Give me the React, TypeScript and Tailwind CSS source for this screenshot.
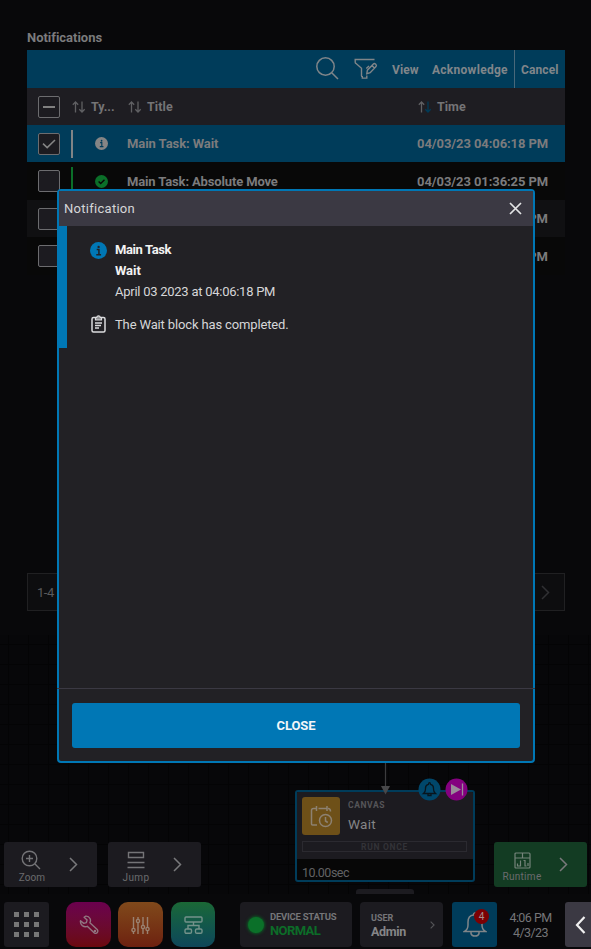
import type { ReactNode } from 'react';

type Row = { title?: string; time: string; kind?: 'info' | 'ok'; checked?: boolean; cls: string; titleCls?: string };

const rows: Row[] = [
  { title: 'Main Task: Wait', time: '04/03/23 04:06:18 PM', kind: 'info', checked: true, cls: 'h-[37px] bg-[#003c5a]', titleCls: 'tracking-[-0.07px]' },
  { title: 'Main Task: Absolute Move', time: '04/03/23 01:36:25 PM', kind: 'ok', cls: 'h-[38px] bg-[#080808]', titleCls: 'tracking-[-0.14px]' },
  { time: 'PM', cls: 'h-[37px] bg-[#101012]' },
  { time: 'PM', cls: 'h-[38px] bg-[#080808]' },
];

function Check({ mark }: { mark?: 'dash' | 'tick' }) {
  return (
    <span className="flex h-[22px] w-[22px] shrink-0 items-center justify-center rounded-[2px] border border-[#6c6c6f] bg-[#1c1b20]">
      {mark === 'dash' && <span className="h-[2px] w-3 bg-[#808080]" />}
      {mark === 'tick' && (
        <svg width="14" height="10" viewBox="0 0 14 10" fill="none" stroke="#858585" strokeWidth="1.5">
          <path d="M1 4.6 5.2 8.6 13 1" />
        </svg>
      )}
    </span>
  );
}

function SortArrows({ active }: { active?: boolean }) {
  return (
    <svg className="shrink-0" width="14" height="12" viewBox="0 0 14 12" fill="none" strokeWidth="1.3">
      <path stroke="#606063" d="M3.5 11.5V1M.8 3.7 3.5 1l2.7 2.7" />
      <path stroke={active ? '#003b58' : '#606063'} d="M10 .5V11M7.3 8.3 10 11l2.7-2.7" />
    </svg>
  );
}

function InfoIcon({ size, fill, ink }: { size: number; fill: string; ink: string }) {
  return (
    <svg className="shrink-0" width={size} height={size} viewBox="0 0 16 16">
      <circle cx="8" cy="8" r="8" fill={fill} />
      <circle cx="8.1" cy="4.6" r="1.1" fill={ink} />
      <path d="M6.3 7h2.1v4.8M5.9 11.9h4.5" fill="none" stroke={ink} strokeWidth="1.4" />
    </svg>
  );
}

function OkIcon() {
  return (
    <svg className="shrink-0" width="13" height="13" viewBox="0 0 13 13">
      <circle cx="6.5" cy="6.5" r="6.5" fill="#0b6f29" />
      <path d="m3.6 6.6 2.1 2 3.8-3.9" fill="none" stroke="#080808" strokeWidth="1.4" />
    </svg>
  );
}

function Chevron({ color = '#77777a', w = 9, h = 15, stroke = 1.5 }: { color?: string; w?: number; h?: number; stroke?: number }) {
  return (
    <svg className="shrink-0" width={w} height={h} viewBox="0 0 9 15" fill="none" stroke={color} strokeWidth={stroke}>
      <path d="m1 1 6.5 6.5L1 14" />
    </svg>
  );
}

function ToolButton({ label, icon, cls, labelCls }: { label: string; icon: ReactNode; cls: string; labelCls: string }) {
  return (
    <div className={`flex h-[45px] w-[93px] items-center rounded-[3px] ${cls}`}>
      <div className="flex h-full w-[56px] flex-col items-center pt-2">
        <span className="flex h-[20px] items-center">{icon}</span>
        <span className={`text-[10px] leading-[12px] text-[#6b6b6e] ${labelCls}`}>{label}</span>
      </div>
      <div className="ml-[9px] flex"><Chevron color="#79797b" /></div>
    </div>
  );
}

function NotificationsPanel() {
  return (
    <section className="h-[635px] shrink-0 bg-[#08080a] px-[27px] pt-[27px] pr-[26px]">
      <div className="flex h-full flex-col text-[13px] font-bold text-[#7b7b7d]">
        <h1 className="h-[23px] leading-[21px] tracking-[-0.02px]">Notifications</h1>
        <div className="flex h-[38px] items-center bg-[#003c5a] pl-[289px] text-[#80868a]">
          <svg className="-mt-[2px]" width="23" height="23" viewBox="0 0 23 23" fill="none" stroke="#7f8589" strokeWidth="1.5">
            <circle cx="9.5" cy="9.5" r="8.7" />
            <path d="m16 16 6 6" />
          </svg>
          <svg className="ml-[15px]" width="24" height="22" viewBox="0 0 24 22" fill="none" stroke="#7f8589" strokeWidth="1.4">
            <path d="M20.5 1.5H1.2v2.7q0 .7.6 1.1L7.5 10.200v7.600q0 .8.800.8v1.500h4.500v-2.600M12.300 10.500l2.700-2.500" />
            <path d="m12.800 15.700.6-3.500 6-6.200q.9-.9 2.100.1l.4.400q1 1.100.1 2.100l-5.800 6.100ZM18 7.500l2.400 2.500" />
          </svg>
          <span className="ml-[14px] w-[40px] pt-px text-[12px] tracking-[0.1px]">View</span>
          <span className="w-[82px] pt-px text-[12px] tracking-[0.28px]">Acknowledge</span>
          <span className="h-full w-px bg-[#49687a]" />
          <span className="ml-[6px] pt-px text-[12px] tracking-[0.1px]">Cancel</span>
        </div>
        <div className="flex h-[37px] items-center bg-[#1e1d22] pl-[11px] text-[12.5px] text-[#747476]">
          <Check mark="dash" />
          <div className="ml-3 flex w-[56px] items-center gap-[5px]"><SortArrows /><span className="pt-[2px]">Ty...</span></div>
          <div className="flex w-[290px] items-center gap-[5px]"><SortArrows /><span className="pt-[2px] tracking-[0.1px]">Title</span></div>
          <div className="flex items-center gap-[5px]"><SortArrows active /><span className="pt-[2px]">Time</span></div>
        </div>
        {rows.map((r, i) => (
          <div key={i} className={`flex items-center pl-[11px] ${r.cls}`}>
            <Check mark={r.checked ? 'tick' : undefined} />
            {r.title ? (
              <>
                <span className={`ml-[11px] h-7 w-[2px] ${r.kind === 'ok' ? 'bg-[#0b6f29]' : 'bg-[#808486]'}`} />
                <span className="ml-[22px] flex w-[32px]">
                  {r.kind === 'ok' ? <OkIcon /> : <InfoIcon size={13} fill="#858585" ink="#003c5a" />}
                </span>
                <span className={`w-[290px] pt-px ${r.titleCls}`}>{r.title}</span>
                <span className="pt-px whitespace-nowrap tracking-[-0.08px]">{r.time}</span>
              </>
            ) : (
              <span className="mr-[17px] ml-auto pt-px">{r.time}</span>
            )}
          </div>
        ))}
        <div className="mt-auto mb-6 flex h-[38px] items-center justify-between border border-[#202022] bg-[#0d0d0f] pr-[14px] pl-[9px] font-normal text-[#5a5a5c]">
          <span className="pt-[2px] tracking-[-0.5px]">1-4</span>
          <Chevron color="#303033" />
        </div>
      </div>
    </section>
  );
}

function WaitBlock() {
  return (
    <>
      <svg className="absolute top-[125px] left-[379px] z-10" width="13" height="35">
        <path d="M6.5 0v28" stroke="#3c3c3e" strokeWidth="1.2" />
        <path d="M2 26h9l-4.5 8.5Z" fill="#48484a" />
      </svg>
      <div className="absolute top-[155px] left-[295px] h-[92px] w-[180px] overflow-hidden rounded-[3px] border-2 border-[#003c5a] bg-[#070707]">
        <div className="h-[67px] bg-[#1c1b20] px-[5px] pt-[5px]">
          <div className="flex">
            <div className="flex h-[38px] w-[38px] items-center justify-center rounded-[3px] bg-[#6e5018]">
              <svg width="23" height="23" viewBox="0 0 23 23" fill="none" stroke="#8d8171" strokeWidth="1.5">
                <path d="M7 20H2.5Q1.5 20 1.5 19V5.5q0-2 2-2H6M8.5 3.5h8M18 3.5q2.5 0 2.5 3M6.5 1v5M17 1v5" />
                <circle cx="15.5" cy="15.5" r="6" />
                <path d="M15.5 12v4l2.3 1.5" />
              </svg>
            </div>
            <div className="ml-2 flex flex-col">
              <span className="mt-[3px] text-[8.5px] leading-[10px] font-bold tracking-[0.6px] text-[#555558]">CANVAS</span>
              <span className="mt-[5px] text-[13.5px] leading-[18px] tracking-[0.3px] text-[#858587]">Wait</span>
            </div>
          </div>
          <div className="mt-[6px] flex h-[11px] w-[165px] items-center justify-center border border-[#2b2a30] text-[8.5px] leading-[9px] font-bold tracking-[0.7px] text-[#333338]"><span className="pt-px">RUN ONCE</span></div>
        </div>
        <div className="pt-[5px] pl-[5px] text-[12.5px] leading-[17px] tracking-[-0.5px] text-[#626264]">10.00sec</div>
      </div>
      <svg className="absolute top-[143px] left-[418px]" width="23" height="23" viewBox="0 0 23 23">
        <circle cx="11.5" cy="11.5" r="11" fill="#00476b" />
        <path d="M5.5 15.5h12q-2-1.5-2-4.500V10q0-3-3-3.700Q12.400 4.700 11.500 4.700t-1 1.600q-3 .7-3 3.700v1q0 3-2 4.500ZM10 16v1.500h3V16" fill="none" stroke="#08151d" strokeWidth="1.300" />
      </svg>
      <svg className="absolute top-[143px] left-[445px]" width="23" height="23" viewBox="0 0 23 23">
        <circle cx="11.5" cy="11.5" r="11" fill="#84007f" />
        <path d="M6 6v11l10-5.500Z" fill="#9a8a9a" />
        <path d="M17.500 5.500v12" stroke="#9a8a9a" strokeWidth="1.300" />
      </svg>
      <div className="absolute top-[254px] left-[356px] h-[5px] w-[58px] rounded-t-[3px] bg-[#1c1b20]" />
    </>
  );
}

function CanvasArea() {
  return (
    <section className="relative h-[259px] shrink-0 bg-[#070709] bg-[linear-gradient(to_right,#040405_1px,transparent_1px),linear-gradient(to_bottom,#040405_1px,transparent_1px)] bg-[size:20px_20px] bg-[position:8px_9px]">
      <WaitBlock />
      <div className="flex h-full items-end px-1 pb-[7px]">
        <ToolButton
          label="Zoom"
          cls="bg-[#1c1b20]"
          labelCls="tracking-[0.1px] pt-[2px]"
          icon={
            <svg className="-ml-[2px]" width="20" height="20" viewBox="0 0 20 20" fill="none" stroke="#747477" strokeWidth="1.400">
              <circle cx="8.500" cy="8.500" r="7.300" />
              <path d="m14 14 5 5M8.500 5v7M5 8.500h7" />
            </svg>
          }
        />
        <div className="ml-[11px]">
          <ToolButton
            label="Jump"
            cls="bg-[#1c1b20]"
            labelCls="tracking-[0.4px] pt-[2px]"
            icon={
              <svg width="18" height="18" viewBox="0 0 18 18" fill="none" stroke="#747477" strokeWidth="1.400">
                <path d="M1.500 1.500h15v5h-15ZM.5 11.500h17M.5 16.500h17" />
              </svg>
            }
          />
        </div>
        <div className="ml-auto">
          <ToolButton
            label="Runtime"
            cls="bg-[#133c23]"
            labelCls="tracking-[0.3px] pt-px"
            icon={
              <svg width="17" height="17" viewBox="0 0 17 17" fill="none" stroke="#75847a" strokeWidth="1.200">
                <path d="M2 1h13q1 0 1 1v13q0 1-1 1H2q-1 0-1-1V2q0-1 1-1ZM1 6h15M8.500 1v5M6.500 8.500v5.500h-3v-2.500M9.500 8.500h1.500V14h1.500M14 11V14" />
              </svg>
            }
          />
        </div>
      </div>
    </section>
  );
}

function BottomBar() {
  return (
    <footer className="flex h-[55px] items-start bg-[#08080a] pt-[8px] pl-1 text-[#757578]">
      <div className="grid h-[45px] w-[45px] grid-cols-[5px_5px_5px] place-content-center gap-[5px] rounded-[3px] bg-[#1c1b20]">
        {Array.from({ length: 9 }, (_, i) => (
          <span key={i} className="h-[5px] w-[5px] bg-[#777777]" />
        ))}
      </div>
      <div className="ml-[17px] flex h-[45px] w-[45px] items-center justify-center rounded-[10px] bg-linear-to-b from-[#6b004e] to-[#6b090d]">
        <svg width="20" height="20" viewBox="0 0 20 20" fill="none" stroke="#917681" strokeWidth="1.400" strokeLinejoin="round">
          <path d="M6.500 1.200Q9.500.800 11 3.500q1 2-.1 4.300l7.300 6.700q1 1.100.3 2.600-.9 1.700-2.900 1.100L8.300 11.300Q5.800 12.300 3.300 10.600 1 8.800 1.500 5.800l3.300 2.600 2.500-.7.800-2.800-3-2.700Z" />
          <circle cx="16" cy="16" r=".6" />
        </svg>
      </div>
      <div className="ml-[7px] flex h-[45px] w-[45px] items-center justify-center rounded-[10px] bg-linear-to-b from-[#80491b] to-[#6d2110]">
        <svg width="19" height="18" viewBox="0 0 19 18" fill="none" stroke="#9a8170" strokeWidth="1.400">
          <path d="M2.500 1v11M2.500 16v2M7 1v2M7 7v11M12 1v8M12 13v5M16.500 1v10M16.500 15v3" />
          <circle cx="2.500" cy="14" r="1.600" />
          <circle cx="7" cy="5" r="1.600" />
          <circle cx="12" cy="11" r="1.600" />
          <circle cx="16.500" cy="13" r="1.600" />
        </svg>
      </div>
      <div className="ml-[8px] flex h-[45px] w-[44px] items-center justify-center rounded-[10px] bg-linear-to-b from-[#1b6835] to-[#0f4659]">
        <svg width="19" height="18" viewBox="0 0 19 18" fill="none" stroke="#74928a" strokeWidth="1.400">
          <rect x="1" y="1" width="17" height="5" rx="1" />
          <path d="M9.500 6v3M4 13V9.500h11V13" />
          <rect x="1" y="13" width="6.500" height="4.300" rx="1.300" />
          <rect x="11.500" y="13" width="6.500" height="4.300" rx="1.300" />
        </svg>
      </div>
      <div className="ml-[25px] flex h-[45px] w-[112px] items-center rounded-[4px] bg-[#1c1b20] pl-2">
        <span className="h-4 w-4 rounded-full bg-[#0b7029] shadow-[0_0_3px_1px_#0b5a23]" />
        <div className="-mt-[2px] ml-[6px] flex flex-col font-bold">
          <span className="text-[9.500px] leading-[13px] tracking-[-0.240px] whitespace-nowrap">DEVICE STATUS</span>
          <span className="text-[13px] leading-[15px] tracking-[-0.600px] text-[#0c6c28]">NORMAL</span>
        </div>
      </div>
      <div className="ml-[8px] flex h-[45px] w-[83px] items-center justify-between rounded-[4px] bg-[#1c1b20] pr-2 pl-[11px]">
        <div className="flex flex-col pt-px font-bold">
          <span className="text-[9px] leading-[12px] tracking-[0px]">USER</span>
          <span className="text-[12.500px] leading-[15px] tracking-[-0.350px] text-[#858587]">Admin</span>
        </div>
        <Chevron w={5} h={8} stroke={2} color="#555558" />
      </div>
      <div className="relative ml-[9px] flex h-[45px] w-[45px] items-center justify-center rounded-[3px] bg-[#003c5a]">
        <svg className="mt-[1px]" width="24" height="26" viewBox="0 0 24 26" fill="none" stroke="#7f8589" strokeWidth="1.500">
          <path d="M1.500 19.500h21Q19 17.500 19 13v-3q0-6.300-5.500-7Q13.500 1 12 1t-1.500 2Q5 3.700 5 10v3q0 4.500-3.500 6.500ZM8 20v1.500q.5 2.500 4 2.500t4-2.500V20" />
        </svg>
        <span className="absolute top-[7px] left-[22px] flex h-[15px] w-[15px] items-center justify-center rounded-full bg-[#7b0003] text-[10px] leading-none text-[#a68f8f]">4</span>
      </div>
      <div className="ml-[8px] flex w-[51px] flex-col items-center pt-[8px] text-[12.500px] leading-[15px] tracking-[-0.550px] whitespace-nowrap">
        <span>4:06 PM</span>
        <span>4/3/23</span>
      </div>
      <div className="ml-auto flex h-[45px] w-[26px] items-center justify-end rounded-l-[3px] bg-[#3b3943] pr-[5px]">
        <svg width="11" height="18" viewBox="0 0 11 18" fill="none" stroke="#f0f0f0" strokeWidth="2.200">
          <path d="M9.500 1 2 9l7.500 8" />
        </svg>
      </div>
    </footer>
  );
}

function NotificationModal() {
  return (
    <div className="absolute top-[189px] left-[57px] z-20 flex h-[574px] w-[478px] flex-col rounded-[4px] border-2 border-[#0077b5] bg-[#222125] text-[13px] text-[#d6d6d8]">
      <div className="flex h-[35px] shrink-0 items-center justify-between bg-[#3b3943] pr-[11px] pl-[5px]">
        <span className="pt-px tracking-[0.280px]">Notification</span>
        <svg width="13" height="13" viewBox="0 0 13 13" fill="none" stroke="#e4e4e6" strokeWidth="1.700">
          <path d="m1 1 11 11M12 1 1 12" />
        </svg>
      </div>
      <div className="flex h-[122px] shrink-0">
        <span className="w-[7.500px] bg-[#0077b5]" />
        <div className="ml-[23px] flex flex-col pt-[13px]">
          <div className="flex">
            <div className="flex w-[25.500px] pt-[3px]"><InfoIcon size={17} fill="#0077b5" ink="#222125" /></div>
            <div className="flex flex-col leading-[21px] whitespace-nowrap">
              <span className="font-bold tracking-[-0.400px] text-[#f2f2f2]">Main Task</span>
              <span className="font-bold tracking-[-0.050px] text-[#f2f2f2]">Wait</span>
              <span className="tracking-[-0.260px]">April 03 2023 at 04:06:18 PM</span>
            </div>
          </div>
          <div className="mt-[12px] flex items-center">
            <div className="-mt-[2px] flex w-[25.500px] pl-[1px]">
              <svg width="15" height="18" viewBox="0 0 15 18" fill="none" stroke="#dcdcde" strokeWidth="1.500">
                <rect x="1" y="2.500" width="13" height="14.500" rx="1.500" />
                <path d="M4.500 5V2.500h1.200Q6 .8 7.500.8t1.800 1.700h1.200V5Z" fill="#8d8d90" strokeWidth="1.200" />
                <path d="M4 8h7M4 10.500h6M4 13h4" strokeWidth="1.300" />
              </svg>
            </div>
            <span className="leading-[21px] tracking-[-0.140px] whitespace-nowrap">The Wait block has completed.</span>
          </div>
        </div>
      </div>
      <div className="-mx-[2px] mt-auto h-px shrink-0 bg-[#3b3943]" />
      <div className="flex h-[72px] shrink-0 items-start px-[13px] pt-[14px]">
        <button className="h-[45px] w-full rounded-[3px] bg-[#0077b5] pt-px text-[13px] font-bold tracking-[-0.100px] text-[#f2f6f9]">CLOSE</button>
      </div>
    </div>
  );
}

export default function App() {
  return (
    <main className="relative flex h-[949px] w-[591px] flex-col overflow-hidden bg-[#08080a] font-[Roboto,'Liberation_Sans',sans-serif]">
      <NotificationsPanel />
      <CanvasArea />
      <BottomBar />
      <NotificationModal />
    </main>
  );
}
